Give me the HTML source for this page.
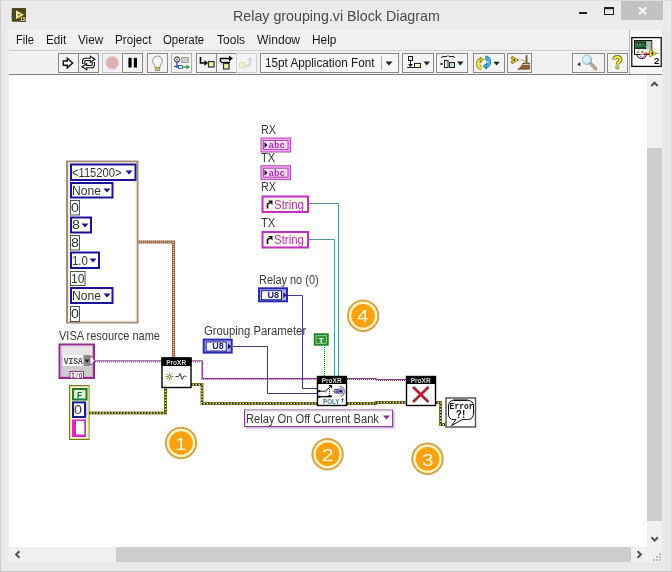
<!DOCTYPE html>
<html><head><meta charset="utf-8">
<style>
html,body{margin:0;padding:0}
body{width:672px;height:572px;background:#e9e9e9;position:relative;overflow:hidden;font-family:"Liberation Sans",sans-serif;}
.abs{position:absolute}
.t{position:absolute;white-space:nowrap;line-height:1;transform-origin:0 0}
svg{position:absolute;left:0;top:0;will-change:transform}
#txt{position:absolute;left:0;top:0;width:672px;height:572px;will-change:transform}
</style></head>
<body>
<!-- window chrome -->
<div class="abs" style="left:0;top:0;width:672px;height:30px;background:#ebebeb"></div>
<div class="abs" style="left:9px;top:30px;width:653px;height:45px;background:#f1f1f1"></div>
<div class="abs" style="left:630px;top:30px;width:32px;height:45px;background:#f6f6f6"></div>
<div class="abs" style="left:9px;top:50px;width:620px;height:1px;background:#cdcdcd"></div>
<div class="abs" style="left:9px;top:30px;width:653px;height:1px;background:#f7f7f7"></div>
<div class="abs" style="left:7px;top:30px;width:2px;height:532px;background:#f0f0f0"></div>
<div class="abs" style="left:9px;top:74px;width:653px;height:1px;background:#828282"></div>
<div class="abs" style="left:629px;top:30px;width:1px;height:44px;background:#b8b8b8"></div>
<!-- caption buttons -->
<div class="abs" style="left:621px;top:1px;width:42px;height:19px;background:#c2c2c2"></div>
<div class="abs" style="left:0;top:0;width:672px;height:1px;background:#dcdcdc"></div>
<div class="abs" style="left:0;top:0;width:1px;height:572px;background:#d0d0d0"></div>
<div class="abs" style="left:671px;top:0;width:1px;height:572px;background:#dcdcdc"></div>
<div class="abs" style="left:0;top:571px;width:672px;height:1px;background:#c6c6c6"></div>
<!-- canvas -->
<div class="abs" style="left:9px;top:75px;width:638px;height:472px;background:#fff"></div>
<!-- scrollbars -->
<div class="abs" style="left:647px;top:75px;width:15px;height:472px;background:#f0f0f0"></div>
<div class="abs" style="left:647px;top:148px;width:15px;height:373px;background:#cdcdcd"></div>
<div class="abs" style="left:9px;top:547px;width:653px;height:15px;background:#f0f0f0"></div>
<div class="abs" style="left:116px;top:547px;width:515px;height:15px;background:#cdcdcd"></div>
<svg width="672" height="572" viewBox="0 0 672 572">
<!-- app icon -->
<g>
<rect x="11.800" y="8" width="14.200" height="13.700" rx="0.800" fill="#4e481c"/>
<rect x="11.500" y="13" width="4" height="1.500" fill="#3c4a44"/>
<rect x="11.500" y="16" width="4" height="1.500" fill="#3c4a44"/>
<path d="M16 10.300 L24 14.800 L16 19.300 Z" fill="#f2e28c"/>
<path d="M16.600 11.300 L19 12.700 L16.600 17 Z" fill="#fbf3c4"/>
<path d="M17.300 14.300 H20.300 L18.800 16 Z" fill="#3a3410"/>
<rect x="20.300" y="16.800" width="5.700" height="4.900" fill="#4e481c"/>
<text x="20.300" y="21.200" font-family="Liberation Sans" font-size="5.600" font-weight="700" fill="#f4ecb8" textLength="5.200" lengthAdjust="spacingAndGlyphs">15</text>
</g>
<!-- caption buttons -->
<rect x="579" y="12" width="8" height="2" fill="#222"/>
<rect x="604.5" y="7.5" width="9" height="7" fill="none" stroke="#222" stroke-width="1"/>
<rect x="604" y="7" width="10" height="2.2" fill="#222"/>
<path d="M639 7.400 L646.200 14.300 M646.200 7.400 L639 14.300" stroke="#fff" stroke-width="1.900" fill="none"/>
<!-- toolbar buttons -->
<g fill="#f3f3f3" stroke="#8a8a8a" stroke-width="1">
<rect x="58.5" y="53.5" width="20" height="19"/>
<rect x="78.5" y="53.5" width="20" height="19"/>
<rect x="102.5" y="53.5" width="20" height="19" stroke="#c4c4c4"/>
<rect x="122.5" y="53.5" width="20" height="19"/>
<rect x="147.5" y="53.5" width="20" height="19"/>
<rect x="171.5" y="53.5" width="20" height="19" stroke="#b0b0b0"/>
<rect x="196.5" y="53.5" width="20" height="19"/>
<rect x="216.5" y="53.5" width="20" height="19"/>
<rect x="236.5" y="53.5" width="20" height="19" stroke="#d0d0d0"/>
<rect x="260.5" y="53.5" width="138" height="19" fill="#f6f6f6"/>
<rect x="402.5" y="53.5" width="31" height="19"/>
<rect x="436.5" y="53.5" width="31" height="19"/>
<rect x="473.5" y="53.5" width="31" height="19"/>
<rect x="507.5" y="53.5" width="24" height="19"/>
<rect x="572.5" y="53.5" width="32" height="19"/>
<rect x="607.5" y="53.5" width="20" height="19"/>
</g>
<!-- run arrow -->
<path d="M63.300 61 H67.300 V58.300 L72.600 63 L67.300 67.800 V65.200 H63.300 Z" fill="#fff" stroke="#111" stroke-width="1.400" stroke-linejoin="miter"/>
<!-- run continuously -->
<g fill="none" stroke-linejoin="miter">
<g stroke="#111" stroke-width="3.300">
<path d="M83.700 64 V61 Q83.700 59.300 85.400 59.300 H91"/>
<path d="M93.300 62 V65 Q93.300 66.700 91.600 66.700 H86"/>
</g>
<path d="M90.300 56.300 L95 59.300 L90.300 62.300 Z" fill="#fff" stroke="#111" stroke-width="1.100"/>
<path d="M86.700 63.700 L82 66.700 L86.700 69.700 Z" fill="#fff" stroke="#111" stroke-width="1.100"/>
<g stroke="#fff" stroke-width="1.200">
<path d="M83.700 63.500 V61 Q83.700 59.300 85.400 59.300 H91.500"/>
<path d="M93.300 62.500 V65 Q93.300 66.700 91.600 66.700 H85.500"/>
</g>
</g>
<!-- abort -->
<path d="M109.600 56.600 H115 L118.600 60.200 V65.600 L115 69.200 H109.600 L106 65.600 V60.200 Z" fill="#ddb0b4" stroke="#ecd2d2" stroke-width="1.200"/>
<!-- pause -->
<rect x="128.400" y="57.800" width="3.200" height="9.700" fill="#000"/><rect x="133.800" y="57.800" width="3.200" height="9.700" fill="#000"/>
<!-- bulb -->
<g>
<path d="M157.500 56 a5 5 0 0 1 2.800 9.100 L160 67.500 H155 L154.700 65.100 A5 5 0 0 1 157.500 56 Z" fill="#f4f4ec" stroke="#999" stroke-width="1"/>
<rect x="155.300" y="67.500" width="4.400" height="3.200" fill="#c8c080" stroke="#8a8450" stroke-width="0.700"/>
</g>
<!-- retain wire values -->
<g>
<circle cx="177" cy="59.500" r="2.600" fill="#fff" stroke="#222" stroke-width="1"/>
<rect x="176.500" y="58.500" width="1" height="2" fill="#222"/>
<rect x="181.500" y="57.500" width="7" height="5" fill="#c8c8c8" stroke="#999" stroke-width="0.800"/>
<path d="M177 62 V68" stroke="#2a3aa0" stroke-width="1.200"/>
<path d="M174 66.500 H180" stroke="#2a3aa0" stroke-width="1.200"/>
<rect x="178.500" y="65.500" width="4" height="3" fill="#d8e4f8" stroke="#3a50b0" stroke-width="0.800"/>
<path d="M183 67 H187" stroke="#30a040" stroke-width="1.400"/>
<path d="M186.500 64.500 L189.800 67 L186.500 69.500 Z" fill="#30a040"/>
</g>
<!-- step into -->
<g>
<path d="M200.500 57 V63 H205.500" fill="none" stroke="#000" stroke-width="1.600"/>
<path d="M204.500 60 L208 63 L204.500 66 Z" fill="#000"/>
<rect x="208.500" y="61.500" width="5.500" height="5.500" fill="#f0f0a0" stroke="#333" stroke-width="1.200"/>
</g>
<!-- step over -->
<g>
<path d="M220.500 62 V58.500 H230" fill="none" stroke="#000" stroke-width="1.600"/>
<path d="M229 55.500 L232.800 58.500 L229 61.500 Z" fill="#000"/>
<path d="M221 62.500 H230" stroke="#000" stroke-width="1.300"/>
<rect x="223.500" y="63.500" width="5.500" height="5.500" fill="#f0f0a0" stroke="#333" stroke-width="1.200"/>
</g>
<!-- step out (disabled) -->
<g opacity="0.9">
<rect x="239.500" y="62.500" width="5.500" height="5.500" fill="#eef2c0" stroke="#d8dcc0" stroke-width="1"/>
<path d="M245.500 65.500 H250 V60" fill="none" stroke="#cfcfcf" stroke-width="1.600"/>
<path d="M247 60.500 L250 57 L253 60.500 Z" fill="#cfcfcf"/>
</g>
<!-- font dropdown -->
<path d="M381.500 56 V70" stroke="#a8a8a8" stroke-width="1"/>
<path d="M385.500 61.500 H392.500 L389 65.500 Z" fill="#222"/>
<!-- align -->
<g>
<rect x="408.500" y="56.500" width="4" height="4" fill="#d0e4f4" stroke="#222" stroke-width="1"/>
<path d="M410.500 61 V66" stroke="#222" stroke-width="1"/>
<path d="M408 64 H413 L410.500 67 Z" fill="#222"/>
<path d="M407 67.500 H421" stroke="#222" stroke-width="1"/>
<rect x="414.500" y="63.500" width="6" height="4" fill="#f8f8d0" stroke="#222" stroke-width="1"/>
<path d="M423.500 61.500 H430 L426.750 65.500 Z" fill="#222"/>
</g>
<!-- distribute -->
<g>
<path d="M441.500 58 q0 -1.500 1.500 -1.500 h4 l1 -1 l1 1 h4 q1.500 0 1.500 1.500" fill="none" stroke="#222" stroke-width="1"/>
<rect x="440.500" y="63" width="2" height="2" fill="#222"/>
<rect x="444.500" y="60.500" width="3.500" height="7" fill="#f8f8d0" stroke="#222" stroke-width="1"/>
<rect x="449.500" y="62.500" width="5" height="5" fill="#b8dcf0" stroke="#222" stroke-width="1"/>
<path d="M457 61.500 H463.500 L460.250 65.500 Z" fill="#222"/>
</g>
<!-- reorder -->
<g fill="none">
<path d="M482 59.600 Q478 60.300 478 63.800 Q478 67.300 481.500 68" stroke="#8a8420" stroke-width="4.200"/>
<path d="M482 59.600 Q478 60.300 478 63.800 Q478 67.300 481.500 68" stroke="#e6de3a" stroke-width="2.800"/>
<path d="M480.300 57 L483.800 59.600 L480.300 62.200 Z" fill="#e6de3a" stroke="#8a8420" stroke-width="0.800"/>
<path d="M484.800 66.400 Q489 65.700 489 62 Q489 58.400 485.300 57.600" stroke="#1f7a98" stroke-width="4.200"/>
<path d="M484.800 66.400 Q489 65.700 489 62 Q489 58.400 485.300 57.600" stroke="#46b4d8" stroke-width="2.800"/>
<path d="M486.500 69 L483 66.400 L486.500 63.800 Z" fill="#46b4d8" stroke="#1f7a98" stroke-width="0.800"/>
<circle cx="479.300" cy="63.800" r="1" fill="#fbf48a"/>
<circle cx="487.700" cy="62" r="1" fill="#a8e4f4"/>
<path d="M493.400 61.700 H499.800 L496.600 65.500 Z" fill="#222"/>
</g>
<!-- cleanup -->
<g>
<path d="M510.500 58 H512.500 M510.500 62 H512.500" stroke="#8a6a10" stroke-width="1"/>
<path d="M512 56.300 L518.300 60 L512 63.800 Z" fill="#f0dc48" stroke="#8a7410" stroke-width="0.900"/>
<circle cx="514.300" cy="60" r="0.900" fill="#222"/>
<path d="M518.500 60 H523 L526 62" stroke="#c8a868" stroke-width="1.100" fill="none"/>
<rect x="525.700" y="55.200" width="1.700" height="7.500" fill="#6a4a28"/>
<path d="M523 63 H529.600 V69.300 H517.800 Q521.500 67.500 523 63 Z" fill="#8a6238" stroke="#5a3c1c" stroke-width="0.600"/>
<path d="M522.500 64.500 H529.500" stroke="#d8c8a0" stroke-width="1"/>
</g>
<!-- search -->
<g>
<path d="M577.200 64.300 L580.300 62.300 V66.300 Z" fill="#222"/>
<path d="M590.300 63.300 L595.600 68.800" stroke="#8a6a58" stroke-width="3" stroke-linecap="round"/>
<path d="M590.300 63.300 L595.600 68.800" stroke="#d4b098" stroke-width="1.800" stroke-linecap="round"/>
<circle cx="586.900" cy="59.800" r="4.400" fill="none" stroke="#7a9aaa" stroke-width="1.200"/>
<circle cx="586.600" cy="59.500" r="4.300" fill="#d4f0fa" stroke="#a6d0e4" stroke-width="1.200"/>
</g>
<!-- help -->
<g>
<path d="M614.200 59.800 q0 -2.900 3.100 -2.900 q3.200 0 3.200 2.600 q0 1.600 -1.700 2.700 q-1.300 0.800 -1.300 2.400" fill="none" stroke="#6e6a18" stroke-width="3.800"/>
<path d="M614.200 59.800 q0 -2.900 3.100 -2.900 q3.200 0 3.200 2.600 q0 1.600 -1.700 2.700 q-1.300 0.800 -1.300 2.400" fill="none" stroke="#f4ec48" stroke-width="2"/>
<circle cx="617.400" cy="67.400" r="1.600" fill="#f4ec48" stroke="#6e6a18" stroke-width="0.900"/>
</g>
<!-- VI icon -->
<g>
<rect x="631.800" y="37.600" width="29.400" height="28.800" fill="#fff" stroke="#111" stroke-width="1.300"/>
<rect x="634.500" y="40.500" width="17.300" height="14" fill="#f4e6d8" stroke="#111" stroke-width="1"/>
<rect x="635" y="41" width="16.300" height="8.300" fill="#9aa8a0"/>
<rect x="635.300" y="41.300" width="10.700" height="7.700" fill="#14401f"/>
<path d="M636 47.500 L637.300 43 L638.600 47.500 L640 43 L641.300 47 Q642.300 42.500 643.300 43.500 Q644.500 44.500 645 47.500" fill="none" stroke="#5aa870" stroke-width="0.800"/>
<circle cx="648.700" cy="43.600" r="1.100" fill="none" stroke="#e8f0e8" stroke-width="0.600"/>
<circle cx="648.700" cy="46.800" r="1.100" fill="none" stroke="#e8f0e8" stroke-width="0.600"/>
<rect x="635" y="49.500" width="16.300" height="2.300" fill="#fbf3ea"/>
<path d="M641 52.700 H650" stroke="#f0b890" stroke-width="1.400"/>
<path d="M637 52 H639 M641.500 51.500 H643" stroke="#333" stroke-width="0.800"/>
<path d="M636.500 54.500 Q637.500 58.500 642 58.700 Q645.500 58.500 646.500 55" fill="none" stroke="#111" stroke-width="1"/>
<ellipse cx="642.300" cy="55.600" rx="2.300" ry="1.600" fill="#fdeef4" stroke="#b04a9a" stroke-width="0.800"/>
<path d="M644 53.700 H650" stroke="#c84a30" stroke-width="1.100"/>
<path d="M649.700 49.900 L656.800 53.400 L649.700 56.900 Z" fill="#f2ea60" stroke="#8a8410" stroke-width="0.900"/>
<circle cx="652.300" cy="53.400" r="1.100" fill="#111"/>
<path d="M656.800 53.400 H659.500" stroke="#a08a30" stroke-width="0.800"/>
</g>
<!-- scrollbar arrows -->
<g fill="none" stroke="#505050" stroke-width="2">
<path d="M651.300 86 L654.500 82.700 L657.700 86"/>
<path d="M651.400 537.300 L654.600 540.600 L657.800 537.300"/>
<path d="M19.400 551.300 L16.100 554.500 L19.400 557.700"/>
<path d="M637.600 551.300 L640.900 554.500 L637.600 557.700"/>
</g>
<!-- size grip -->
<g fill="#bdbdbd">
<rect x="659" y="553" width="2" height="2"/>
<rect x="656" y="556" width="2" height="2"/><rect x="659" y="556" width="2" height="2"/>
<rect x="653" y="559" width="2" height="2"/><rect x="656" y="559" width="2" height="2"/><rect x="659" y="559" width="2" height="2"/>
</g>
</svg>

<svg width="672" height="572" viewBox="0 0 672 572" font-family="Liberation Sans, sans-serif">
<!-- ===== wires ===== -->
<!-- cluster wire (brown) -->
<g fill="none">
<path d="M138 242 H173.500 V358" stroke="#9c664a" stroke-width="3"/>
<path d="M138 242 H174 M173.500 242 V358" stroke="#ecd2be" stroke-width="1" stroke-dasharray="1 1"/>
</g>
<!-- VISA purple wires -->
<g fill="none" stroke="#8e3e8e">
<path d="M95 360.800 H161.500" stroke-width="1"/>
<path d="M95 361.800 H161.500" stroke-width="1" stroke-dasharray="1 1"/>
<path d="M191 360.800 H202.500 V378.500 H317" stroke-width="1"/>
<path d="M191 361.800 H201.500 V379.500 H317" stroke-width="1" stroke-dasharray="1 1"/>
<path d="M347 378.500 H376.500 V379.500 H406" stroke-width="1"/>
<path d="M347 379.500 H376 M376 380.500 H406" stroke-width="1" stroke-dasharray="1 1"/>
</g>
<!-- error wires -->
<g fill="none" stroke-linejoin="miter">
<g stroke="#80802a" stroke-width="3">
<path d="M89 413 H165.500 V387.500"/>
<path d="M191 384.500 H202 V403.500 H317"/>
<path d="M347 403.500 H376 V402.500 H406"/>
<path d="M436 402.500 H440.500 V424.500 H446"/>
</g>
<g stroke="#f0ec70" stroke-width="1">
<path d="M89 413 H165.500 V387.500"/>
<path d="M191 384.500 H202 V403.500 H317"/>
<path d="M347 403.500 H376 V402.500 H406"/>
<path d="M436 402.500 H440.500 V424.500 H446"/>
</g>
<g stroke="#111" stroke-width="1.400" stroke-dasharray="1.500 1.500">
<path d="M89 413 H165.500 V387.500"/>
<path d="M191 384.500 H202 V403.500 H317"/>
<path d="M347 403.500 H376 V402.500 H406"/>
<path d="M436 402.500 H440.500 V424.500 H446"/>
</g>
</g>
<!-- blue U8 wires -->
<g fill="none" stroke="#3e3e80" stroke-width="1">
<path d="M288 295.500 H302.500 V388.500 H317"/>
<path d="M233 346.500 H267.500 V393.500 H317"/>
</g>
<!-- teal string wires -->
<g fill="none" stroke="#55949f" stroke-width="1">
<path d="M309 203.500 H338.500 V376"/>
<path d="M309 239.500 H334.500 V376"/>
</g>
<!-- green boolean -->
<path d="M324.500 345 V376" stroke="#2a8a2a" stroke-width="1" stroke-dasharray="1 1" fill="none"/>

<!-- ===== cluster constant ===== -->
<rect x="67" y="161.500" width="70.500" height="161" fill="#fff" stroke="#a58e78" stroke-width="2"/>
<rect x="68.500" y="163" width="67.500" height="158" fill="none" stroke="#efe6dc" stroke-width="1"/>
<g fill="#fff" stroke="#1c1296" stroke-width="2">
<rect x="71" y="164.500" width="64.500" height="15.500"/>
<rect x="71" y="183" width="41.500" height="14.500"/>
<rect x="71" y="217.500" width="20" height="15"/>
<rect x="71" y="252.500" width="28" height="15.500"/>
<rect x="71" y="288" width="41.500" height="15"/>
</g>
<g fill="#fff" stroke="#555" stroke-width="1">
<rect x="70.500" y="200.500" width="9" height="14.500"/>
<rect x="70.500" y="235.500" width="9" height="14.500"/>
<rect x="70.500" y="271.500" width="14.500" height="14"/>
<rect x="70.500" y="306.500" width="9" height="15"/>
</g>
<g fill="#1c1296">
<path d="M125.500 170.500 H132.500 L129 174.500 Z"/>
<path d="M103.500 188.500 H110.500 L107 192.500 Z"/>
<path d="M81.500 223.500 H88.500 L85 227.500 Z"/>
<path d="M89.500 258.500 H96.500 L93 262.500 Z"/>
<path d="M103.500 293.500 H110.500 L107 297.500 Z"/>
</g>

<!-- ===== VISA control ===== -->
<rect x="59.500" y="344.500" width="34.500" height="33.500" fill="#cccccc" stroke="#8e2f8c" stroke-width="2"/>
<rect x="61" y="346" width="31.500" height="30.500" fill="none" stroke="#d9a6d6" stroke-width="1"/>
<rect x="61.500" y="346.500" width="30.500" height="8.500" fill="#e6e6e6"/>
<rect x="63" y="355" width="20.500" height="11" fill="#fff"/>
<rect x="83.500" y="355" width="6.500" height="11" fill="#8c8c8c"/>
<path d="M84.500 359.500 H89.500 L87 363 Z" fill="#222"/>
<path d="M90 356.500 H92 L94.500 360.500 L92 364.500 H90 Z" fill="#fff" stroke="#93358f" stroke-width="0.800"/>
<text x="63.800" y="364.200" font-family="Liberation Mono, monospace" font-size="8.600" font-weight="700" fill="#444" textLength="19" lengthAdjust="spacingAndGlyphs">VISA</text>
<rect x="70" y="371.500" width="13.500" height="7" fill="#fff" stroke="#93358f" stroke-width="1"/>
<text x="71.300" y="377.600" font-family="Liberation Mono, monospace" font-size="6.500" font-weight="700" fill="#93358f" textLength="11" lengthAdjust="spacingAndGlyphs">I/O</text>

<!-- ===== error cluster constant ===== -->
<rect x="69.500" y="385.500" width="19.500" height="54" fill="#fbfbe0" stroke="#767632" stroke-width="1"/>
<rect x="70.500" y="386.500" width="17.500" height="52" fill="none" stroke="#e6e48a" stroke-width="1"/>
<rect x="73" y="389" width="13.500" height="10.500" fill="#dff0df" stroke="#1f7a2a" stroke-width="2"/>
<text x="77" y="397.600" font-size="8.500" font-weight="700" fill="#1a6a22">F</text>
<rect x="73" y="402.400" width="12" height="14.600" fill="#fff" stroke="#1c1a8c" stroke-width="2"/>
<rect x="86" y="402" width="1.500" height="15.500" fill="#c9d2ef"/>
<rect x="72" y="419.500" width="14" height="17.500" fill="#e023c8"/>
<rect x="76" y="421" width="8.500" height="13.500" fill="#fff"/>
<rect x="84.500" y="419.500" width="1.500" height="17.500" fill="#a04aa8"/>

<!-- ===== VI 1 ===== -->
<rect x="162" y="358" width="29" height="29.500" fill="#fff" stroke="#000" stroke-width="1.400"/>
<rect x="161.500" y="357.500" width="30" height="8.500" fill="#000"/>
<text x="166.200" y="364.700" font-size="7.500" font-weight="700" fill="#d4d4d4" textLength="20" lengthAdjust="spacingAndGlyphs">ProXR</text>
<g stroke="#7a8a30" stroke-width="0.900" fill="none">
<path d="M169.500 372.500 V380.500 M165.500 376.500 H173.500 M166.700 373.700 L172.300 379.300 M172.300 373.700 L166.700 379.300"/>
</g>
<circle cx="169.500" cy="376.500" r="1.300" fill="#fff" stroke="#7a8a30" stroke-width="0.700"/>
<path d="M175.500 376.500 H178 Q179.300 376.500 179.500 374.500 Q180 372.500 180.700 375 L181.700 378.500 Q182.300 380.500 183 378 Q183.600 375.500 184.500 376 Q185 376.500 186.500 376.500" fill="none" stroke="#222" stroke-width="0.900"/>

<!-- ===== VI 2 ===== -->
<rect x="317.500" y="376.500" width="29" height="29" fill="#fff" stroke="#000" stroke-width="1.400"/>
<rect x="317" y="376" width="30" height="8" fill="#000"/>
<text x="321.700" y="383" font-size="7.500" font-weight="700" fill="#d4d4d4" textLength="20" lengthAdjust="spacingAndGlyphs">ProXR</text>
<text x="323" y="404" font-size="6.600" font-weight="700" fill="#3f808c" textLength="16.500" lengthAdjust="spacingAndGlyphs">POLY</text>
<g fill="none" stroke="#111" stroke-width="1">
<path d="M319 391.200 H325.500 L330.500 386.300"/>
<path d="M319 396.700 H331.500" stroke-width="1.300"/>
<path d="M329.500 389 V396" stroke-dasharray="1 1"/>
</g>
<path d="M328.300 385 H332 V388.700 Z" fill="#111"/>
<rect x="318" y="390.200" width="2.300" height="2" fill="#111"/>
<rect x="318" y="395.700" width="2.300" height="2" fill="#111"/>
<rect x="327.500" y="395.300" width="4.300" height="1.500" fill="#111"/>
<circle cx="325.700" cy="391.200" r="0.900" fill="#fff" stroke="#333" stroke-width="0.500"/>
<g>
<path d="M339.500 386.300 q4.800 0.500 5 4.800 q-0.200 3.700 -3.800 5.300" fill="none" stroke="#8a8a9a" stroke-width="1.200"/>
<path d="M332 391.200 H334" stroke="#777" stroke-width="0.700"/>
<path d="M334 389.600 H339 M333.500 391.200 H339 M334 392.800 H339" stroke="#34349c" stroke-width="0.900"/>
<path d="M336.200 388.600 V393.800 M337.800 388.600 V393.800" stroke="#34349c" stroke-width="0.600"/>
<circle cx="340.600" cy="391.200" r="2.500" fill="#c4c8ee" stroke="#4a4a9c" stroke-width="0.800"/>
<circle cx="340.600" cy="391.200" r="1.300" fill="#111"/>
<path d="M342.500 398.700 V402.300 M341.400 400.200 L342.500 398.500 L343.600 400.200" stroke="#2a4a8a" stroke-width="0.900" fill="none"/>
</g>

<!-- ===== VI 3 ===== -->
<rect x="406.500" y="376.500" width="29" height="29" fill="#fff" stroke="#000" stroke-width="1.400"/>
<rect x="406" y="376" width="30" height="8" fill="#000"/>
<text x="410.700" y="383" font-size="7.500" font-weight="700" fill="#d4d4d4" textLength="20" lengthAdjust="spacingAndGlyphs">ProXR</text>
<path d="M413 387 L428.500 402 M428.500 387 L413 402" stroke="#a8283a" stroke-width="2.800" fill="none"/>
<circle cx="420.750" cy="394.500" r="1.800" fill="#e01020"/>

<!-- ===== error handler ===== -->
<rect x="446" y="398" width="29.500" height="29" fill="#fff" stroke="#5a5a5a" stroke-width="1.500"/>
<path d="M453 399.500 H468" stroke="#777" stroke-width="1"/>
<path d="M453.500 400.500 H467.500 Q473.500 400.500 473.500 406 V413 Q473.500 419.500 467.500 419.500 H462.500 L451.500 425.500 L456 419.500 H453.500 Q448.500 419.500 448.500 414 V406 Q448.500 400.500 453.500 400.500 Z" fill="#fff" stroke="#111" stroke-width="1"/>
<text x="449.600" y="408.900" font-family="Liberation Mono, monospace" font-size="8.800" font-weight="700" fill="#111" textLength="24" lengthAdjust="spacingAndGlyphs">Error</text>
<text x="455.800" y="418.300" font-size="11.500" font-weight="700" fill="#111" textLength="9.400" lengthAdjust="spacingAndGlyphs">?!</text>

<!-- ===== abc boxes ===== -->
<g id="abc1">
<rect x="261" y="138" width="29.500" height="14" fill="#f2a6f2" stroke="#b14cb4" stroke-width="1"/>
<rect x="263.500" y="140.500" width="24.500" height="9" fill="#f9dcf9" stroke="#b14cb4" stroke-width="1"/>
<path d="M264.500 142 L267.500 145 L264.500 148 Z" fill="#2a0a2a"/>
<text x="268.500" y="148.200" font-family="Liberation Mono, monospace" font-size="8.500" font-weight="700" fill="#b030b8" textLength="16.500" lengthAdjust="spacingAndGlyphs">abc</text>
<path d="M268.500 149 H285.500" stroke="#d070d0" stroke-width="0.800" stroke-dasharray="1 1"/>
</g>
<g transform="translate(0,27.700)">
<rect x="261" y="138" width="29.500" height="14" fill="#f2a6f2" stroke="#b14cb4" stroke-width="1"/>
<rect x="263.500" y="140.500" width="24.500" height="9" fill="#f9dcf9" stroke="#b14cb4" stroke-width="1"/>
<path d="M264.500 142 L267.500 145 L264.500 148 Z" fill="#2a0a2a"/>
<text x="268.500" y="148.200" font-family="Liberation Mono, monospace" font-size="8.500" font-weight="700" fill="#b030b8" textLength="16.500" lengthAdjust="spacingAndGlyphs">abc</text>
<path d="M268.500 149 H285.500" stroke="#d070d0" stroke-width="0.800" stroke-dasharray="1 1"/>
</g>

<!-- ===== String boxes ===== -->
<g>
<rect x="262.500" y="196.500" width="45.500" height="15.500" fill="#fff9e8" stroke="#c22fc2" stroke-width="2"/>
<rect x="266" y="200.500" width="6.500" height="8.500" fill="#fff"/>
<path d="M267.500 208.500 V205 Q267.500 203 270 203 H270.500" fill="none" stroke="#111" stroke-width="1.700"/>
<path d="M268 200.500 H272.500 V205 Z" fill="#111"/>
</g>
<g transform="translate(0,35.500)">
<rect x="262.500" y="196.500" width="45.500" height="15.500" fill="#fff9e8" stroke="#c22fc2" stroke-width="2"/>
<rect x="266" y="200.500" width="6.500" height="8.500" fill="#fff"/>
<path d="M267.500 208.500 V205 Q267.500 203 270 203 H270.500" fill="none" stroke="#111" stroke-width="1.700"/>
<path d="M268 200.500 H272.500 V205 Z" fill="#111"/>
</g>

<!-- ===== U8 boxes ===== -->
<g>
<rect x="259" y="288.300" width="28" height="13" fill="#b4b4f4" stroke="#2a2ab0" stroke-width="2"/>
<rect x="261.500" y="290.700" width="20" height="9" fill="#fff" stroke="#23238a" stroke-width="1"/>
<text x="267.500" y="298.200" font-size="8.200" font-weight="700" fill="#1b1b86" textLength="11.500" lengthAdjust="spacingAndGlyphs">U8</text>
<path d="M283.300 292.200 L286.300 295.200 L283.300 298.200 Z" fill="#14144a"/>
</g>
<g transform="translate(-55.300,51.300)">
<rect x="259" y="288.300" width="28" height="13" fill="#b4b4f4" stroke="#2a2ab0" stroke-width="2"/>
<rect x="261.500" y="290.700" width="20" height="9" fill="#fff" stroke="#23238a" stroke-width="1"/>
<text x="267.500" y="298.200" font-size="8.200" font-weight="700" fill="#1b1b86" textLength="11.500" lengthAdjust="spacingAndGlyphs">U8</text>
<path d="M283.300 292.200 L286.300 295.200 L283.300 298.200 Z" fill="#14144a"/>
</g>

<!-- ===== T constant ===== -->
<rect x="314.500" y="334" width="13.500" height="11" fill="#2f9a3a" stroke="#1f7a2a" stroke-width="1.400"/>
<rect x="316" y="335.500" width="10.500" height="8" fill="none" stroke="#8fd08f" stroke-width="0.800"/>
<text x="318.700" y="343" font-size="8" font-weight="700" fill="#fff">T</text>

<!-- ===== ring ===== -->
<rect x="246" y="411.500" width="148.500" height="17" fill="#cdb0dc"/>
<rect x="244.500" y="410" width="148" height="16.500" fill="#fff" stroke="#82488f" stroke-width="1"/>
<path d="M245.500 426 V411 H392" fill="none" stroke="#e6d8ee" stroke-width="1"/>
<path d="M383 415.500 H390 L386.500 419.500 Z" fill="#8a2a9a"/>

<!-- ===== orbs ===== -->
<g transform="translate(181,443)"><circle r="15.200" fill="#fff4c0" stroke="#d4a54e" stroke-width="2"/><circle r="11.800" fill="#fea30f"/></g>
<g transform="translate(327.600,454.200)"><circle r="15.200" fill="#fff4c0" stroke="#d4a54e" stroke-width="2"/><circle r="11.800" fill="#fea30f"/></g>
<g transform="translate(427.500,458.800)"><circle r="15.200" fill="#fff4c0" stroke="#d4a54e" stroke-width="2"/><circle r="11.800" fill="#fea30f"/></g>
<g transform="translate(363.100,315.800)"><circle r="15.200" fill="#fff4c0" stroke="#d4a54e" stroke-width="2"/><circle r="11.800" fill="#fea30f"/></g>
</svg>

<div id="txt">
<div class="t" style="left:232.6px;top:8.3px;font-size:15px;color:#4a4a4a;font-weight:400;transform:scaleX(0.9503)">Relay grouping.vi Block Diagram</div>
<div class="t" style="left:15.8px;top:34.2px;font-size:12px;color:#1a1a1a;font-weight:400;transform:scaleX(0.9274)">File</div>
<div class="t" style="left:46.0px;top:34.2px;font-size:12px;color:#1a1a1a;font-weight:400;transform:scaleX(0.9784)">Edit</div>
<div class="t" style="left:78.0px;top:34.2px;font-size:12px;color:#1a1a1a;font-weight:400;transform:scaleX(0.9784)">View</div>
<div class="t" style="left:115.0px;top:34.2px;font-size:12px;color:#1a1a1a;font-weight:400;transform:scaleX(0.9754)">Project</div>
<div class="t" style="left:163.3px;top:34.2px;font-size:12px;color:#1a1a1a;font-weight:400;transform:scaleX(0.9488)">Operate</div>
<div class="t" style="left:216.8px;top:34.2px;font-size:12px;color:#1a1a1a;font-weight:400;transform:scaleX(1.0044)">Tools</div>
<div class="t" style="left:257.3px;top:34.2px;font-size:12px;color:#1a1a1a;font-weight:400;transform:scaleX(1.0106)">Window</div>
<div class="t" style="left:312.3px;top:34.2px;font-size:12px;color:#1a1a1a;font-weight:400;transform:scaleX(0.9900)">Help</div>
<div class="t" style="left:265.3px;top:56.7px;font-size:12px;color:#1a1a1a;font-weight:400;transform:scaleX(0.9765)">15pt Application Font</div>
<div class="t" style="left:261.1px;top:124.0px;font-size:12px;color:#3a3a3a;font-weight:400;transform:scaleX(0.9021)">RX</div>
<div class="t" style="left:261.3px;top:151.5px;font-size:12px;color:#3a3a3a;font-weight:400;transform:scaleX(0.9281)">TX</div>
<div class="t" style="left:261.1px;top:181.4px;font-size:12px;color:#3a3a3a;font-weight:400;transform:scaleX(0.9021)">RX</div>
<div class="t" style="left:261.3px;top:216.7px;font-size:12px;color:#3a3a3a;font-weight:400;transform:scaleX(0.9281)">TX</div>
<div class="t" style="left:258.6px;top:274.2px;font-size:12px;color:#3a3a3a;font-weight:400;transform:scaleX(0.9123)">Relay no (0)</div>
<div class="t" style="left:203.6px;top:325.2px;font-size:12px;color:#3a3a3a;font-weight:400;transform:scaleX(0.9394)">Grouping Parameter</div>
<div class="t" style="left:58.8px;top:330.2px;font-size:12px;color:#3a3a3a;font-weight:400;transform:scaleX(0.9171)">VISA resource name</div>
<div class="t" style="left:246.3px;top:412.7px;font-size:12px;color:#3a3a3a;font-weight:400;transform:scaleX(0.9284)">Relay On Off Current Bank</div>
<div class="t" style="left:274.3px;top:198.5px;font-size:12px;color:#b040b0;font-weight:400;transform:scaleX(0.9547)">String</div>
<div class="t" style="left:274.3px;top:233.7px;font-size:12px;color:#b040b0;font-weight:400;transform:scaleX(0.9547)">String</div>
<div class="t" style="left:71.8px;top:166.5px;font-size:12px;color:#333;font-weight:400;transform:scaleX(0.9298)">&lt;115200&gt;</div>
<div class="t" style="left:71.8px;top:184.5px;font-size:12px;color:#333;font-weight:400;transform:scaleX(1.0088)">None</div>
<div class="t" style="left:70.8px;top:202.0px;font-size:12px;color:#333;font-weight:400;transform:scaleX(1.1873)">0</div>
<div class="t" style="left:71.8px;top:219.2px;font-size:12px;color:#333;font-weight:400;transform:scaleX(1.1873)">8</div>
<div class="t" style="left:70.8px;top:237.2px;font-size:12px;color:#333;font-weight:400;transform:scaleX(1.1873)">8</div>
<div class="t" style="left:71.8px;top:254.7px;font-size:12px;color:#333;font-weight:400;transform:scaleX(0.9552)">1.0</div>
<div class="t" style="left:70.8px;top:272.5px;font-size:12px;color:#333;font-weight:400;transform:scaleX(1.0060)">10</div>
<div class="t" style="left:71.8px;top:289.9px;font-size:12px;color:#333;font-weight:400;transform:scaleX(1.0088)">None</div>
<div class="t" style="left:70.8px;top:308.2px;font-size:12px;color:#333;font-weight:400;transform:scaleX(1.1873)">0</div>
<div class="t" style="left:73.8px;top:404.2px;font-size:12px;color:#333;font-weight:400;transform:scaleX(1.1873)">0</div>
<div class="t" style="left:175.3px;top:435.7px;font-size:17px;color:#fff8d8;font-weight:400;transform:scaleX(1.2187)">1</div>
<div class="t" style="left:322.0px;top:446.5px;font-size:17px;color:#fff8d8;font-weight:400;transform:scaleX(1.2187)">2</div>
<div class="t" style="left:421.8px;top:451.5px;font-size:17px;color:#fff8d8;font-weight:400;transform:scaleX(1.2187)">3</div>
<div class="t" style="left:357.3px;top:308.3px;font-size:17px;color:#fff8d8;font-weight:400;transform:scaleX(1.2187)">4</div>
<div class="t" style="left:653.5px;top:57.2px;font-size:8.5px;color:#111;font-weight:700;transform:scaleX(1.1448)">2</div>
</div>
</body></html>
